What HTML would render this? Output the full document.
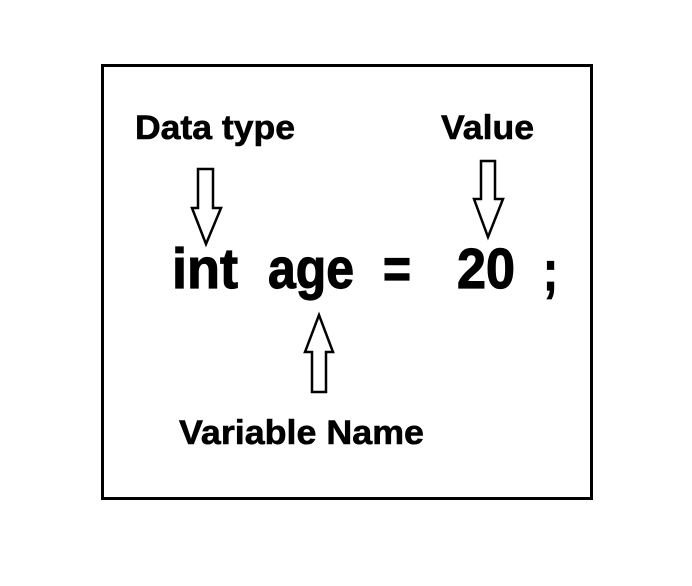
<!DOCTYPE html>
<html><head><style>html,body{margin:0;padding:0;background:#fff;width:692px;height:586px;overflow:hidden}</style></head>
<body>
<svg width="692" height="586" viewBox="0 0 692 586" xmlns="http://www.w3.org/2000/svg" font-family="Liberation Sans, sans-serif" font-weight="bold">
<rect x="102.5" y="65.5" width="489" height="433" fill="none" stroke="#000" stroke-width="3"/>
<g stroke="#000" stroke-width="0.6">
<text x="135" y="139" font-size="34" textLength="160" lengthAdjust="spacingAndGlyphs">Data type</text>
<text x="441" y="139" font-size="34" textLength="93" lengthAdjust="spacingAndGlyphs">Value</text>
<text x="179" y="444" font-size="34" textLength="245" lengthAdjust="spacingAndGlyphs">Variable Name</text>
</g>
<g font-size="57" stroke="#000" stroke-width="1.2">
<text x="172" y="288" textLength="66" lengthAdjust="spacingAndGlyphs">int</text>
<text x="268" y="288" textLength="86" lengthAdjust="spacingAndGlyphs">age</text>
<text x="383" y="288" textLength="28" lengthAdjust="spacingAndGlyphs">=</text>
<text x="457" y="288" textLength="58" lengthAdjust="spacingAndGlyphs">20</text>
<text x="543" y="290" textLength="15" lengthAdjust="spacingAndGlyphs">;</text>
</g>
<g fill="none" stroke="#000" stroke-width="2.5" stroke-linejoin="miter">
<path d="M198 169 H213 V208 H221 L206 244 L192 208 H198 Z"/>
<path d="M481 161 H495 V199 H503 L488 237 L474 199 H481 Z"/>
<path d="M312 392 H326 V352 H333 L319 315 L305 352 H312 Z"/>
</g>
</svg>
</body></html>
